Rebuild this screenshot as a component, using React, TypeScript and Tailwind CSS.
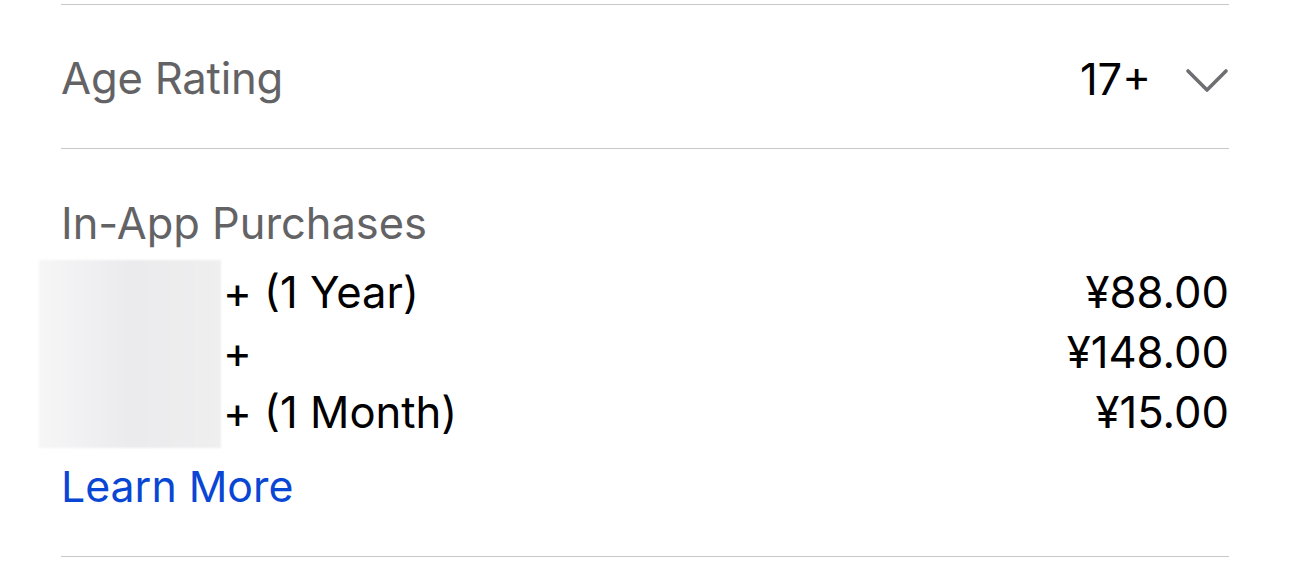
import React from "react";

const items = [
  { name: "+ (1 Year)", price: "¥88.00" },
  { name: "+", price: "¥148.00" },
  { name: "+ (1 Month)", price: "¥15.00" },
];

export default function App() {
  return (
    <div
      className="w-[1290px] h-[576px] bg-white overflow-hidden px-[61px]"
      style={{ fontFamily: "Inter, 'Noto Sans', 'Liberation Sans', sans-serif" }}
    >
      <div className="h-[4px]" />
      <div className="h-px bg-[#c8c8ca]" />
      <div className="h-[143px] flex items-center justify-between pt-1">
        <span className="text-[43.6px] leading-[60px] text-[#636366] tracking-[-0.2px]">Age Rating</span>
        <div className="flex items-center gap-[34px]">
          <span className="text-[43.5px] leading-[60px] text-black">17+</span>
          <svg width="44" height="28" viewBox="0 0 44 28" className="mt-1">
            <path d="M3 4 L22 23 L41 4" fill="none" stroke="#6e6e73" strokeWidth="3.6" strokeLinecap="round" strokeLinejoin="round" />
          </svg>
        </div>
      </div>
      <div className="h-px bg-[#c8c8ca]" />
      <div className="pt-[44px]">
        <div className="text-[43.4px] leading-[60px] text-[#636366]">In-App Purchases</div>
        <div className="relative mt-[10px]">
          <div className="absolute left-[-22px] top-[-3px] w-[182px] h-[188px] bg-gradient-to-r from-[#f6f6f7] via-[#ebebed] to-[#efeff0] blur-[1px]" />
          {items.map((it) => (
            <div key={it.price} className="flex justify-between text-[43.6px] leading-[60px] text-black">
              <span className="flex">
                <span className="inline-block w-[162px]" />
                <span>{it.name}</span>
              </span>
              <span>{it.price}</span>
            </div>
          ))}
        </div>
        <div className="mt-[14px] text-[42.8px] leading-[60px] text-[#0a46d4]">Learn More</div>
      </div>
      <div className="mt-[39px] h-px bg-[#c8c8ca]" />
    </div>
  );
}
